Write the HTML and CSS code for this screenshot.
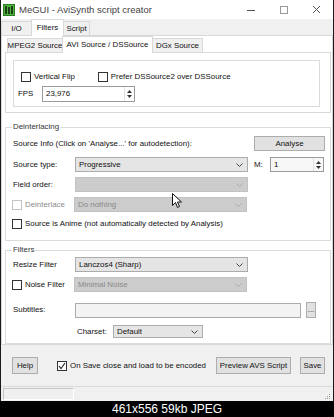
FILE: index.html
```html
<!DOCTYPE html>
<html lang="en">
<head>
    <meta charset="UTF-8">
    <meta name="viewport" content="width=device-width, initial-scale=1.0">
    <title>MeGUI - AviSynth script creator</title>
    <link rel="stylesheet" href="styles.css">
</head>
<body>

    <!-- Dialog window -->
    <div class="window">

        <!-- Title bar -->
        <div class="titlebar">
            <svg class="app-icon" viewBox="0 0 12 12">
                <rect x="0.5" y="0.5" width="11" height="11" fill="#4cb83c" stroke="#2d7a24"/>
                <rect x="2" y="2" width="2" height="8" fill="#1f3d1a"/>
                <rect x="8" y="2" width="2" height="8" fill="#1f3d1a"/>
                <rect x="5" y="3" width="2" height="7" fill="#1f3d1a"/>
            </svg>
            <span class="title">MeGUI - AviSynth script creator</span>
            <div class="caption-buttons">
                <svg viewBox="0 0 33 19"><path d="M13 10.5 H21" stroke="#555"/></svg>
                <svg viewBox="0 0 33 19"><rect x="13.5" y="6.5" width="7" height="7" fill="none" stroke="#999"/></svg>
                <svg viewBox="0 0 33 19"><path d="M13 6 L20 13 M20 6 L13 13" stroke="#555"/></svg>
            </div>
        </div>

        <!-- Main tabs -->
        <div class="tabstrip">
            <div class="tab tab-io">I/O</div>
            <div class="tab tab-filters active">Filters</div>
            <div class="tab tab-script">Script</div>
        </div>

        <div class="tabpage">

            <!-- Source tabs -->
            <div class="subtabs">
                <div class="tab tab-mpeg">MPEG2 Source</div>
                <div class="tab tab-avi active">AVI Source / DSSource</div>
                <div class="tab tab-dgx">DGx Source</div>
            </div>

            <div class="subpage">
                <div class="box">
                    <div class="row flip-row">
                        <span class="check"></span>
                        <span class="check-text">Vertical Flip</span>
                        <span class="check prefer"></span>
                        <span class="check-text">Prefer DSSource2 over DSSource</span>
                    </div>
                    <div class="row fps-row">
                        <span class="fps-label">FPS</span>
                        <div class="numeric fps">
                            <span>23,976</span>
                            <div class="spin">
                                <svg viewBox="0 0 5 3"><path d="M0 3 L2.5 0 L5 3 Z" fill="#333"/></svg>
                                <svg viewBox="0 0 5 3"><path d="M0 0 L2.5 3 L5 0 Z" fill="#333"/></svg>
                            </div>
                        </div>
                    </div>
                </div>
            </div>

            <!-- Deinterlacing -->
            <fieldset class="group">
                <legend>Deinterlacing</legend>
                <div class="group-body deint-body">
                    <div class="row">
                        <span>Source Info (Click on 'Analyse...' for autodetection):</span>
                        <div class="button analyse">Analyse</div>
                    </div>
                    <div class="row gap6">
                        <span class="label">Source type:</span>
                        <div class="combo">
                            <span>Progressive</span>
                            <svg class="chev" viewBox="0 0 7 4"><path d="M0.5 0.5 L3.5 3.5 L6.5 0.5" fill="none" stroke="#444"/></svg>
                        </div>
                        <span class="m-label">M:</span>
                        <div class="numeric m-value">
                            <span>1</span>
                            <div class="spin">
                                <svg viewBox="0 0 5 3"><path d="M0 3 L2.5 0 L5 3 Z" fill="#333"/></svg>
                                <svg viewBox="0 0 5 3"><path d="M0 0 L2.5 3 L5 0 Z" fill="#333"/></svg>
                            </div>
                        </div>
                    </div>
                    <div class="row gap5">
                        <span class="label">Field order:</span>
                        <div class="combo disabled">
                            <span></span>
                            <svg class="chev" viewBox="0 0 7 4"><path d="M0.5 0.5 L3.5 3.5 L6.5 0.5" fill="none" stroke="#aaa"/></svg>
                        </div>
                    </div>
                    <div class="row gap5">
                        <span class="label with-check">
                            <span class="check disabled"></span>
                            <span class="muted">Deinterlace</span>
                        </span>
                        <div class="combo disabled">
                            <span>Do nothing</span>
                            <svg class="chev" viewBox="0 0 7 4"><path d="M0.5 0.5 L3.5 3.5 L6.5 0.5" fill="none" stroke="#aaa"/></svg>
                        </div>
                    </div>
                    <div class="row gap5 anime-row">
                        <span class="check"></span>
                        <span class="check-text">Source is Anime (not automatically detected by Analysis)</span>
                    </div>
                </div>
            </fieldset>

            <!-- Filters -->
            <fieldset class="group filters">
                <legend>Filters</legend>
                <div class="group-body filters-body">
                    <div class="row">
                        <span class="label">Resize Filter</span>
                        <div class="combo">
                            <span>Lanczos4 (Sharp)</span>
                            <svg class="chev" viewBox="0 0 7 4"><path d="M0.5 0.5 L3.5 3.5 L6.5 0.5" fill="none" stroke="#444"/></svg>
                        </div>
                    </div>
                    <div class="row gap5">
                        <span class="label with-check">
                            <span class="check"></span>
                            <span>Noise Filter</span>
                        </span>
                        <div class="combo disabled">
                            <span>Minimal Noise</span>
                            <svg class="chev" viewBox="0 0 7 4"><path d="M0.5 0.5 L3.5 3.5 L6.5 0.5" fill="none" stroke="#aaa"/></svg>
                        </div>
                    </div>
                    <div class="row gap10 subs-row">
                        <span class="label">Subtitles:</span>
                        <div class="textbox"></div>
                        <div class="button browse">...</div>
                    </div>
                    <div class="row gap7 charset-row">
                        <span class="charset-label">Charset:</span>
                        <div class="combo charset">
                            <span>Default</span>
                            <svg class="chev" viewBox="0 0 7 4"><path d="M0.5 0.5 L3.5 3.5 L6.5 0.5" fill="none" stroke="#444"/></svg>
                        </div>
                    </div>
                </div>
            </fieldset>
        </div>

        <!-- Bottom buttons -->
        <div class="bottombar">
            <div class="button help">Help</div>
            <span class="check checked">
                <svg viewBox="0 0 8 8"><path d="M1 4 L3 6.5 L7 1" fill="none" stroke="#222" stroke-width="1.1"/></svg>
            </span>
            <span class="check-text">On Save close and load to be encoded</span>
            <div class="button preview">Preview AVS Script</div>
            <div class="button save">Save</div>
        </div>

        <!-- Status bar -->
        <div class="statusbar">
            <div class="status-panel"></div>
            <svg class="grip" viewBox="0 0 6 6">
                <rect x="4" y="0" width="1" height="1" fill="#999"/>
                <rect x="2" y="2" width="1" height="1" fill="#999"/>
                <rect x="4" y="2" width="1" height="1" fill="#999"/>
                <rect x="0" y="4" width="1" height="1" fill="#999"/>
                <rect x="2" y="4" width="1" height="1" fill="#999"/>
                <rect x="4" y="4" width="1" height="1" fill="#999"/>
            </svg>
        </div>

        <!-- Mouse pointer over the form -->
        <svg class="pointer" viewBox="0 0 11 16">
            <path d="M0.5 0.5 L0.5 12.5 L3.5 9.5 L5.5 14.5 L7.5 13.5 L5.5 9 L9.5 9 Z" fill="#fff" stroke="#111"/>
        </svg>
    </div>

    <div class="caption">461x556 59kb JPEG</div>

</body>
</html>
```

FILE: styles.css
```css
/* Reset and page frame */
* {
    box-sizing: border-box;
}

body {
    margin: 0;
    width: 334px;
    height: 417px;
    overflow: hidden;
    background-color: #000;
    color: #111;
    font-family: "Liberation Sans", Arial, sans-serif;
    font-size: 7.9px;
    line-height: 1;
    white-space: nowrap;
}

/* Window */
.window {
    position: relative;
    height: 401px;
    display: flex;
    flex-direction: column;
    background-color: #f0f0f0;
    border-left: 1px solid #1a1a1a;
    border-right: 1px solid #1a1a1a;
}

.titlebar {
    height: 19px;
    flex: none;
    display: flex;
    align-items: center;
    background-color: #fff;
}

.app-icon {
    width: 12px;
    height: 12px;
    margin-left: 2px;
}

.title {
    margin-left: 4px;
    font-size: 9.5px;
    color: #444;
}

.caption-buttons {
    margin-left: auto;
    display: flex;
}

.caption-buttons svg {
    width: 33px;
    height: 19px;
}

/* Tabs */
.tabstrip {
    height: 16px;
    flex: none;
    display: flex;
    align-items: flex-end;
}

.tab {
    height: 14px;
    display: flex;
    align-items: center;
    justify-content: center;
    border: 1px solid #d9d9d9;
    border-bottom: none;
    background-color: #f0f0f0;
    margin-right: -1px;
}

.tab.active {
    height: 17px;
    margin-bottom: -1px;
    background-color: #fff;
    position: relative;
    z-index: 1;
}

.tab-io { width: 31px; }
.tab-filters { width: 33px; }
.tab-script { width: 27px; }

.tabpage {
    flex: none;
    height: 310px;
    background-color: #fff;
    border: 1px solid #d9d9d9;
}

.subtabs {
    height: 16px;
    display: flex;
    align-items: flex-end;
    padding-left: 5px;
}

.tab-mpeg { width: 56px; }
.tab-avi { width: 91px; }
.tab-dgx { width: 51px; }

.subpage {
    height: 61px;
    margin: 0 1px 0 3px;
    border: 1px solid #d9d9d9;
}

.box {
    height: 47px;
    margin: 7px 10px 0 7px;
    padding: 10px 0 0 0;
    border: 1px solid #dcdcdc;
}

/* Rows and labels */
.row {
    height: 15px;
    display: flex;
    align-items: center;
}

.gap5 { margin-top: 5px; }
.gap6 { margin-top: 6px; }
.gap7 { margin-top: 7px; }
.gap10 { margin-top: 10px; }

.flip-row {
    height: 12px;
    padding-left: 7px;
}

.fps-row {
    height: 16px;
    margin-top: 3px;
    padding-left: 4px;
}

.fps-label {
    width: 24px;
}

.label {
    width: 62px;
    flex: none;
}

.with-check {
    display: flex;
    align-items: center;
    margin-left: -1px;
}

.check {
    width: 10px;
    height: 10px;
    flex: none;
    display: flex;
    align-items: center;
    justify-content: center;
    border: 1px solid #333;
    background-color: #fff;
}

.check.disabled {
    border-color: #c4c4c4;
}

.check svg {
    width: 8px;
    height: 8px;
}

.check-text,
.with-check > span + span {
    margin-left: 3px;
}

.check.prefer {
    margin-left: 23px;
}

.muted {
    color: #8d8d8d;
}

/* Inputs */
.combo {
    width: 173px;
    height: 15px;
    flex: none;
    display: flex;
    align-items: center;
    padding-left: 3px;
    border: 1px solid #acacac;
    background-color: #e5e5e5;
}

.combo.disabled {
    background-color: #cccccc;
    border-color: #c2c2c2;
    color: #8a8a8a;
}

.chev {
    width: 7px;
    height: 4px;
    margin-left: auto;
    margin-right: 4px;
}

.numeric {
    height: 16px;
    display: flex;
    align-items: center;
    padding-left: 3px;
    border: 1px solid #9a9a9a;
    background-color: #fff;
}

.numeric.fps {
    width: 93px;
}

.numeric.m-value {
    width: 54px;
    height: 15px;
    margin-left: auto;
    margin-right: 1px;
    background-color: #f7f7f7;
}

.spin {
    margin-left: auto;
    width: 10px;
    height: 100%;
    display: flex;
    flex-direction: column;
    justify-content: center;
    align-items: center;
    gap: 2px;
    border-left: 1px solid #e0e0e0;
}

.spin svg {
    width: 5px;
    height: 3px;
}

.m-label {
    margin-left: 6px;
}

.textbox {
    width: 226px;
    height: 15px;
    border: 1px solid #acacac;
    background-color: #f3f3f3;
}

/* Buttons */
.button {
    display: flex;
    align-items: center;
    justify-content: center;
    border: 1px solid #adadad;
    background-color: #e1e1e1;
}

.analyse {
    width: 71px;
    height: 15px;
    margin-left: auto;
}

.browse {
    width: 10px;
    height: 16px;
    margin-left: 5px;
}

/* Group boxes */
.group {
    margin: 9px 1px 0 3px;
    padding: 0;
    border: 1px solid #dcdcdc;
    min-width: 0;
}

.group.filters {
    margin-top: 4px;
}

.group legend {
    margin-left: 6px;
    padding: 0 1px;
    line-height: 10px;
    color: #333;
}

.group-body {
    padding: 4px 5px 10px 7px;
}

.filters-body {
    padding: 2px 5px 5px 7px;
}

.anime-row {
    height: 13px;
    margin-left: -1px;
}

.subs-row {
    height: 16px;
}

.charset-row {
    height: 13px;
    padding-left: 64px;
}

.charset-label {
    width: 36px;
}

.combo.charset {
    width: 90px;
    height: 13px;
}

/* Bottom bar */
.bottombar {
    height: 41px;
    flex: none;
    display: flex;
    align-items: center;
    padding: 0 8px 0 11px;
}

.help {
    width: 26px;
    height: 17px;
}

.bottombar .check {
    margin-left: 19px;
}

.preview {
    width: 75px;
    height: 17px;
    margin-left: auto;
}

.save {
    width: 25px;
    height: 17px;
    margin-left: 9px;
}

.statusbar {
    height: 15px;
    flex: none;
    display: flex;
    align-items: center;
    border-top: 1px solid #dadada;
}

.status-panel {
    width: 71px;
    height: 12px;
    margin-left: 2px;
    border: 1px solid #c6c6c6;
    border-right-color: #fff;
    border-bottom-color: #fff;
}

.grip {
    width: 6px;
    height: 6px;
    margin: auto 2px 1px auto;
}

/* Mouse pointer lies over the combo boxes */
.pointer {
    position: absolute;
    left: 171px;
    top: 193px;
    width: 11px;
    height: 16px;
}

/* Forum thumbnail caption */
.caption {
    height: 16px;
    display: flex;
    align-items: center;
    justify-content: center;
    color: #fff;
    font-size: 12px;
}
```
